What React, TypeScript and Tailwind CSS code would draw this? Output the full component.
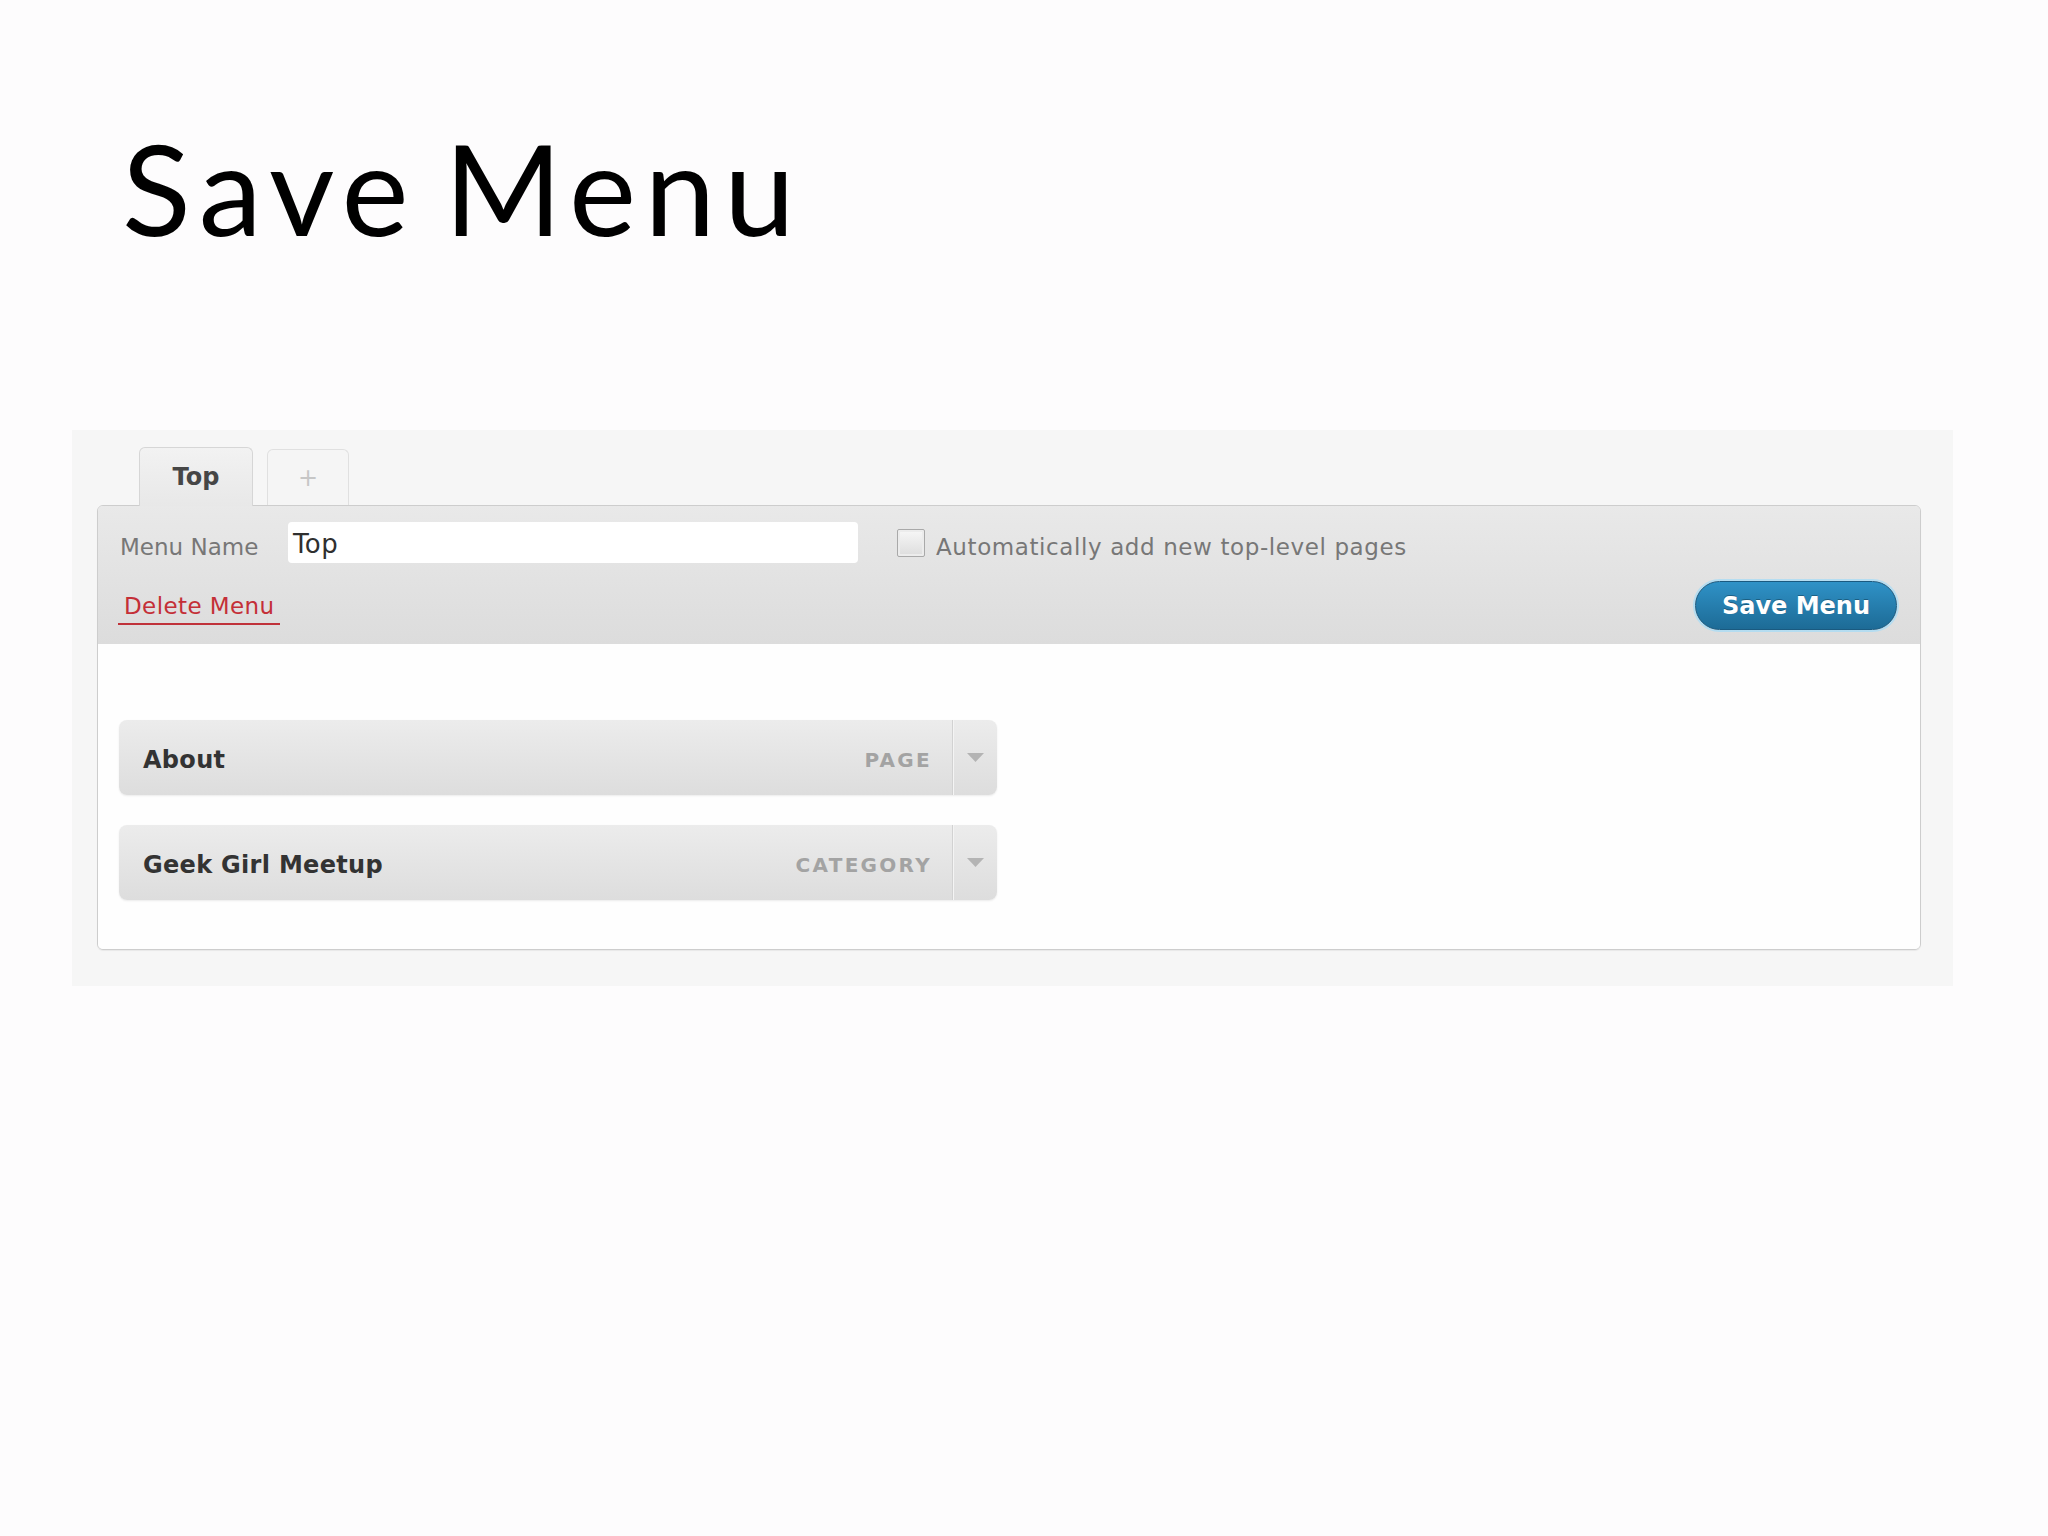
const uiFont = { fontFamily: '"DejaVu Sans", Verdana, sans-serif' };

type Item = { title: string; kind: string };

const items: Item[] = [
  { title: "About", kind: "PAGE" },
  { title: "Geek Girl Meetup", kind: "CATEGORY" },
];

function MenuItemBar({ item }: { item: Item }) {
  return (
    <div className="flex h-[75px] w-[878px] items-stretch rounded-[8px] bg-gradient-to-b from-[#ececec] to-[#dddddd] shadow-[0_1px_2px_rgba(0,0,0,0.08)]">
      <div className="flex flex-1 items-center justify-between pl-[24px] pr-[20px] pt-[5px]">
        <span className="text-[24px] font-bold tracking-[0.3px] text-[#333333]">{item.title}</span>
        <span className="text-[20px] font-bold tracking-[2.3px] text-[#a3a3a3]">{item.kind}</span>
      </div>
      <div className="flex w-[45px] items-center justify-center border-l border-[#d2d2d2] shadow-[inset_1px_0_0_#f4f4f4]">
        <svg width="17" height="9" viewBox="0 0 17 9">
          <polygon points="0,0 17,0 8.5,9" fill="#b4b4b4" />
        </svg>
      </div>
    </div>
  );
}

export default function App() {
  return (
    <div className="min-h-screen bg-[#fdfcfd]">
      <h1
        className="ml-[122px] pt-[124px] text-[127px] font-normal leading-none tracking-[0.068em] text-black [word-spacing:-14px]"
        style={{ fontFamily: "Lato, 'DejaVu Sans', sans-serif" }}
      >
        Save Menu
      </h1>

      <section className="ml-[72px] mt-[179px] w-[1881px] bg-[#f6f6f6] pb-[36px] pl-[25px] pt-[17px]" style={uiFont}>
        {/* tabs */}
        <div className="flex items-end pl-[42px]">
          <div className="relative z-10 -mb-px flex h-[59px] w-[114px] items-center justify-center rounded-t-[6px] border border-b-0 border-[#d6d6d6] bg-gradient-to-b from-[#f2f2f2] to-[#e8e8e8]">
            <span className="text-[24px] font-bold text-[#464646]">Top</span>
          </div>
          <div className="ml-[14px] flex h-[56px] w-[82px] items-center justify-center rounded-t-[6px] border border-b-0 border-[#e0e0e0] bg-[#f5f5f5]">
            <span className="text-[24px] text-[#c6c6c6]">+</span>
          </div>
        </div>

        {/* menu editor box */}
        <div className="w-[1824px] overflow-hidden rounded-[6px] border border-[#cdcdcd] shadow-[0_1px_1px_rgba(0,0,0,0.06)]">
          <div className="bg-gradient-to-b from-[#e9e9e9] to-[#dcdcdc] pb-[14px] pl-[22px] pr-[23px] pt-[16px]">
            <div className="flex h-[41px] items-center">
              <label className="w-[168px] pt-[10px] text-[23px] text-[#777777]">Menu Name</label>
              <div className="flex h-[41px] w-[570px] items-center rounded-[4px] bg-white pl-[5px] pt-[4px] text-[26px] tracking-[0.4px] text-[#2f2f2f]">
                Top
              </div>
              <div className="ml-[39px] h-[28px] w-[28px] rounded-[2px] border border-[#a9a9a9] bg-gradient-to-b from-[#f7f7f7] to-[#dddddd] shadow-[inset_0_0_0_2px_#ececec]" />
              <span className="ml-[11px] pt-[10px] text-[23px] tracking-[0.6px] text-[#777777]">
                Automatically add new top-level pages
              </span>
            </div>
            <div className="mt-[18px] flex h-[49px] items-center justify-between">
              <a className="ml-[-2px] mt-[8px] border-b-2 border-[#c0323a] px-[6px] pb-[5px] text-[23px] leading-[24px] tracking-[0.4px] text-[#c42f37]">
                Delete Menu
              </a>
              <button className="flex h-[49px] w-[202px] items-center justify-center rounded-full border border-[#1a5a80] bg-gradient-to-b from-[#2f92c7] to-[#1d6b96] text-[24px] font-bold text-white shadow-[0_0_0_2px_rgba(170,220,245,0.8)] [text-shadow:0_-1px_0_rgba(0,0,0,0.3)]">
                Save Menu
              </button>
            </div>
          </div>

          <div className="flex flex-col gap-[30px] bg-[#fefefe] pb-[49px] pl-[21px] pt-[76px]">
            {items.map((item) => (
              <MenuItemBar key={item.title} item={item} />
            ))}
          </div>
        </div>
      </section>
    </div>
  );
}
